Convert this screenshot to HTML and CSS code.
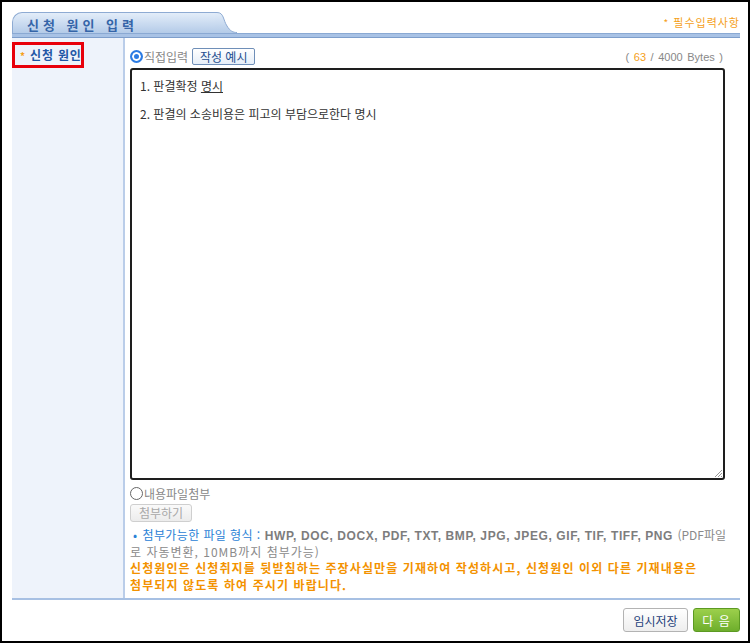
FILE: index.html
```html
<!DOCTYPE html>
<html lang="ko">
<head>
  <meta charset="UTF-8">
  <title>신청 원인 입력</title>
  <link rel="stylesheet" href="styles.css">
</head>
<body>
  <div class="frame">
    <div class="panel">
      <div class="tab-row">
        <div class="tab">신청 원인 입력</div>
        <svg class="tab-curve" width="22" height="21" viewBox="0 0 22 21">
          <defs>
            <linearGradient id="tabGrad" x1="0" y1="0" x2="0" y2="1">
              <stop offset="0" stop-color="#e3edf9"/>
              <stop offset="1" stop-color="#b4cbe8"/>
            </linearGradient>
          </defs>
          <path d="M0 0.5 H2 C9 0.5 8 8 12 14 C15 19 18 20.5 22 20.5 V21 H0 Z" fill="url(#tabGrad)"/>
          <path d="M0 0.5 H2 C9 0.5 8 8 12 14 C15 19 18 20.5 22 20.5" fill="none" stroke="#8eabd3" stroke-width="1"/>
        </svg>
        <div class="tab-rest">
          <span class="required"><span class="star">*</span> 필수입력사항</span>
        </div>
      </div>
      <div class="tab-bar"></div>

      <div class="form-row">
        <div class="side">
          <div class="label-box"><span class="star">*</span> 신청 원인</div>
        </div>
        <div class="main">
          <div class="input-head">
            <label class="option">
              <span class="radio checked"></span>직접입력
            </label>
            <button class="btn-example">작성 예시</button>
            <span class="counter">( <em>63</em> / 4000 Bytes )</span>
          </div>

          <div class="editor">
            <p>1. 판결확정 <u>명시</u></p>
            <p>&nbsp;</p>
            <p>2. 판결의 소송비용은 피고의 부담으로한다 명시</p>
            <svg class="grip" width="10" height="10" viewBox="0 0 10 10">
              <path d="M9 2 L2 9 M9 5 L5 9 M9 8 L8 9" stroke="#999" stroke-width="1"/>
            </svg>
          </div>

          <label class="option option-file">
            <span class="radio"></span>내용파일첨부
          </label>
          <button class="btn-attach" disabled>첨부하기</button>

          <p class="file-info">
            <span class="bullet">•</span> <span class="info-title">첨부가능한 파일 형식 :</span>
            <b>HWP, DOC, DOCX, PDF, TXT, BMP, JPG, JPEG, GIF, TIF, TIFF, PNG</b> <span class="info-tail">(PDF파일</span><br>로 자동변환, 10MB까지 첨부가능)
          </p>
          <p class="notice">
            신청원인은 신청취지를 뒷받침하는 주장사실만을 기재하여 작성하시고, 신청원인 이외 다른 기재내용은<br>첨부되지 않도록 하여 주시기 바랍니다.
          </p>
        </div>
      </div>

      <div class="bottom-line"></div>
      <div class="actions">
        <button class="btn-save">임시저장</button>
        <button class="btn-next">다 음</button>
      </div>
    </div>
  </div>
</body>
</html>
```

FILE: styles.css
```css
* {
  box-sizing: border-box;
}

body {
  margin: 0;
  padding: 0;
  background-color: #ffffff;
  font-family: "Noto Sans CJK KR", "Noto Sans", sans-serif;
  font-size: 12px;
  color: #333;
}

.frame {
  width: 750px;
  height: 643px;
  border: 2px solid #000;
  overflow: hidden;
}

.panel {
  padding: 10px 8px 0 10px;
}

/* header tab */
.tab-row {
  display: flex;
  align-items: flex-end;
  height: 21px;
}

.tab {
  width: 203px;
  height: 21px;
  padding: 4px 0 0 14px;
  border-top: 1px solid #8eabd3;
  border-left: 1px solid #8eabd3;
  border-top-left-radius: 10px;
  background: linear-gradient(#e3edf9, #b4cbe8);
  color: #3565a8;
  font-size: 13px;
  font-weight: bold;
  letter-spacing: 4px;
  line-height: 16px;
  white-space: nowrap;
}

.tab-curve {
  display: block;
  flex: none;
}

.tab-rest {
  flex: 1;
  text-align: right;
  padding-bottom: 3px;
}

.required {
  color: #f5a01a;
  font-size: 11px;
  line-height: 14px;
  letter-spacing: 1px;
}

.star {
  color: #f5a01a;
  font-size: 10px;
}

.tab-bar {
  height: 5px;
  background-color: #a8c2e5;
  border-top: 1px solid #8aa9d3;
  border-bottom: 1px solid #7e9ecb;
}

/* form row */
.form-row {
  display: flex;
  height: 560px;
}

.side {
  width: 113px;
  background-color: #eef3fb;
  border-right: 2px solid #bacde9;
  padding-top: 4px;
}

.label-box {
  width: 72px;
  height: 26px;
  border: 3px solid #e8000b;
  padding-left: 5px;
  color: #1f57a6;
  font-weight: bold;
  font-size: 12px;
  line-height: 19px;
  letter-spacing: 0.8px;
  white-space: nowrap;
}

.main {
  flex: 1;
  padding: 10px 0 0 5px;
}

.input-head {
  display: flex;
  align-items: center;
  height: 17px;
  margin-bottom: 3px;
  width: 595px;
}

.option {
  display: flex;
  align-items: center;
  color: #888;
  font-size: 12px;
}

.radio {
  display: inline-block;
  width: 13px;
  height: 13px;
  border: 1px solid #666;
  border-radius: 50%;
  background-color: #fff;
  margin-right: 1px;
}

.radio.checked {
  border: 2px solid #2b7be3;
  background-color: #2b7be3;
  box-shadow: inset 0 0 0 2px #fff;
}

.btn-example {
  margin-left: 4px;
  width: 63px;
  height: 17px;
  padding: 0;
  border: 1px solid #6f8fb8;
  border-radius: 2px;
  background: linear-gradient(#ffffff, #e6eef8);
  color: #1f4f8f;
  font-family: inherit;
  font-size: 12px;
  line-height: 14px;
}

.counter {
  margin-left: auto;
  margin-right: 2px;
  color: #888;
  font-family: "Liberation Sans", Arial, sans-serif;
  font-size: 11px;
  word-spacing: 1.5px;
}

.counter em {
  font-style: normal;
  color: #f5a01a;
}

.editor {
  position: relative;
  width: 595px;
  height: 412px;
  border: 2px solid #1e1e1e;
  border-radius: 3px;
  padding: 9px 8px;
}

.editor p {
  margin: 0;
  line-height: 14px;
  font-size: 12px;
  color: #333;
}

.grip {
  position: absolute;
  right: 0;
  bottom: 0;
}

.option-file {
  margin-top: 6px;
  height: 14px;
}

.btn-attach {
  display: block;
  margin-top: 4px;
  width: 62px;
  height: 18px;
  padding: 0;
  border: 1px solid #cfcfcf;
  border-radius: 3px;
  background: linear-gradient(#fafafa, #ececec);
  color: #a8a8a8;
  font-family: inherit;
  font-size: 12px;
  line-height: 14px;
}

.file-info {
  margin: 5px 0 0 0;
  font-size: 12px;
  line-height: 15px;
  color: #8a8a8a;
  letter-spacing: 1px;
  white-space: nowrap;
}

.bullet {
  color: #2a82d6;
  margin-left: 3px;
}

.info-title {
  color: #2a82d6;
  letter-spacing: 0.4px;
}

.file-info b {
  font-family: "Liberation Sans", Arial, sans-serif;
  font-size: 12px;
  color: #7d7d7d;
  letter-spacing: 0.6px;
}

.info-tail {
  letter-spacing: 0;
}

.notice {
  margin: 0;
  color: #f39200;
  font-weight: bold;
  font-size: 12px;
  line-height: 17px;
  letter-spacing: 1.1px;
  white-space: nowrap;
}

.bottom-line {
  height: 2px;
  background-color: #a7c0e3;
}

.actions {
  display: flex;
  justify-content: flex-end;
  gap: 5px;
  padding-top: 8px;
}

.btn-save,
.btn-next {
  height: 24px;
  border-radius: 3px;
  font-family: inherit;
  font-size: 12px;
  padding: 0;
}

.btn-save {
  width: 65px;
  border: 1px solid #b3b3b3;
  background: linear-gradient(#ffffff, #eeeeee);
  color: #1f3f7a;
}

.btn-next {
  width: 47px;
  border: 1px solid #5c9a22;
  background: linear-gradient(#9cd04c, #6eae2c);
  color: #fff;
  letter-spacing: 1px;
}
```
